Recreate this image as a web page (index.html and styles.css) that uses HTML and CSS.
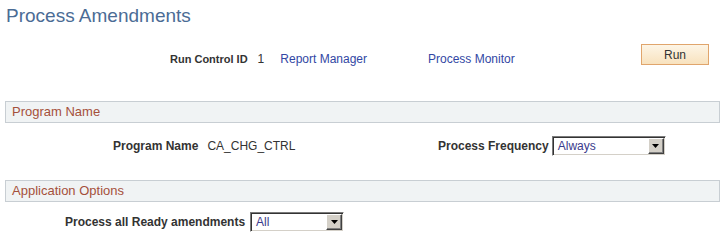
FILE: index.html
```html
<!DOCTYPE html>
<html lang="en">
  <head>
    <meta charset="UTF-8" />
    <meta name="viewport" content="width=device-width, initial-scale=1.0" />
    <title>Process Amendments</title>
    <link rel="stylesheet" href="styles.css">
  </head>
  <body>
    <h1 class="page-title">Process Amendments</h1>

    <!-- Run control bar -->
    <div class="run-bar">
      <div class="run-info">
        <span class="run-label">Run Control ID</span>
        <span class="run-id">1</span>
        <a href="#" class="link link-report">Report Manager</a>
        <a href="#" class="link link-monitor">Process Monitor</a>
      </div>
      <button class="run-button">Run</button>
    </div>

    <!-- Program Name group -->
    <div class="group-header">Program Name</div>
    <div class="field-row row-program">
      <div class="field field-program">
        <span class="field-label">Program Name</span>
        <span class="field-value">CA_CHG_CTRL</span>
      </div>
      <div class="field field-frequency">
        <span class="field-label">Process Frequency</span>
        <div class="dropdown dropdown-wide">
          <span class="dropdown-text">Always</span>
          <span class="dropdown-arrow">
            <svg width="7" height="4" viewBox="0 0 7 4"><path d="M0 0H7L3.5 4Z" fill="#000"/></svg>
          </span>
        </div>
      </div>
    </div>

    <!-- Application Options group -->
    <div class="group-header group-options">Application Options</div>
    <div class="field-row row-options">
      <div class="field field-ready">
        <span class="field-label">Process all Ready amendments</span>
        <div class="dropdown dropdown-narrow">
          <span class="dropdown-text">All</span>
          <span class="dropdown-arrow">
            <svg width="7" height="4" viewBox="0 0 7 4"><path d="M0 0H7L3.5 4Z" fill="#000"/></svg>
          </span>
        </div>
      </div>
    </div>
  </body>
</html>
```

FILE: styles.css
```css
/* Base */
* {
  box-sizing: border-box;
}
body {
  margin: 0;
  font-family: "Liberation Sans", Arial, sans-serif;
  font-size: 12px;
  color: #333;
  background: #fff;
}

/* Title */
.page-title {
  margin: 0;
  padding: 5px 0 0 6px;
  font-size: 19px;
  font-weight: normal;
  line-height: 22px;
  color: #4b6c95;
}

/* Run control bar */
.run-bar {
  display: flex;
  align-items: flex-start;
  margin-top: 17px;
  height: 21px;
}
.run-info {
  display: flex;
  align-items: baseline;
  margin-left: 170px;
  padding-top: 8px;
  line-height: 14px;
}
.run-label {
  font-size: 11px;
  font-weight: bold;
}
.run-id {
  margin-left: 10px;
}
.link {
  color: #3247a4;
  text-decoration: none;
}
.link-report {
  margin-left: 16px;
}
.link-monitor {
  margin-left: 61px;
}
.run-button {
  margin-left: auto;
  margin-right: 16px;
  width: 68px;
  height: 21px;
  padding: 0;
  border: 1px solid #e0a56c;
  background: linear-gradient(#fdf5e6, #f8e2be);
  font-family: inherit;
  font-size: 12px;
  color: #333;
  cursor: pointer;
}

/* Group box headers */
.group-header {
  margin: 36px 5px 0 5px;
  height: 22px;
  padding-left: 6px;
  border: 1px solid #c8ced3;
  background: #f0f3f4;
  color: #a5503b;
  font-size: 13px;
  line-height: 20px;
}
.group-options {
  margin-top: 24px;
}

/* Field rows */
.field-row {
  display: flex;
  align-items: center;
  height: 20px;
  margin-top: 13px;
}
.row-options {
  margin-top: 10px;
}
.field {
  display: flex;
  align-items: center;
}
.field-label {
  font-weight: bold;
}
.field-program {
  width: 438px;
  padding-left: 113px;
}
.field-value {
  margin-left: 9px;
}
.field-frequency .dropdown {
  margin-left: 3px;
}
.field-ready {
  padding-left: 65px;
}
.field-ready .dropdown {
  margin-left: 5px;
}

/* Dropdowns */
.dropdown {
  display: flex;
  align-items: center;
  height: 20px;
  border: 1px solid;
  border-color: #7b7b7b #fff #fff #7b7b7b;
  box-shadow: inset 1px 1px #333, inset -1px -1px #d4d0c8;
  background: #fff;
  padding: 1px;
}
.dropdown-wide {
  width: 114px;
}
.dropdown-narrow {
  width: 94px;
}
.dropdown-text {
  flex: 1;
  padding-left: 4px;
  color: #3a3a8c;
  line-height: 16px;
}
.dropdown-arrow {
  display: flex;
  align-items: center;
  justify-content: center;
  width: 16px;
  height: 16px;
  background: #d4d0c8;
  border: 1px solid;
  border-color: #fff #404040 #404040 #fff;
  box-shadow: inset -1px -1px #808080;
}
```
